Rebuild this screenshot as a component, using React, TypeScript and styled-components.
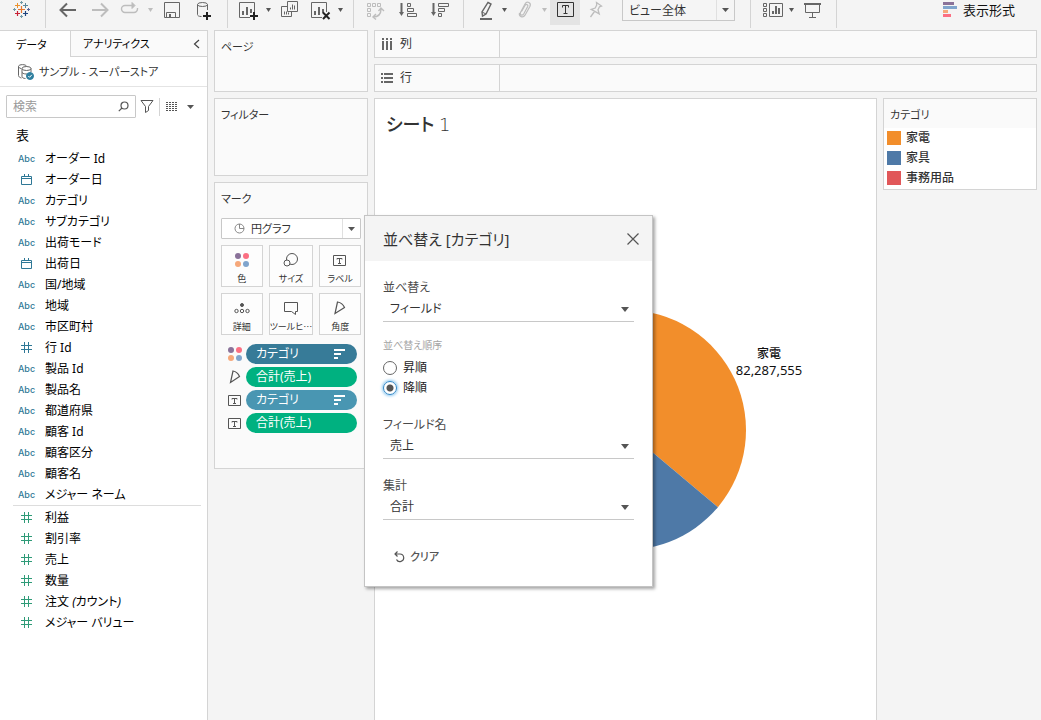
import React from 'react';
import styled, { createGlobalStyle, css } from 'styled-components';

const LINE = '#d4d4d4';
const INK = '#333';
const ICON = '#666';
const FAINT = '#bdbdbd';

const GlobalStyle = createGlobalStyle`
  * { box-sizing: border-box; }
  body {
    margin: 0;
    background: #f4f4f4;
    color: ${INK};
    font-family: 'Noto Sans', 'Noto Sans CJK JP', sans-serif;
    font-size: 12px;
    line-height: 16px;
    font-feature-settings: 'palt';
  }
  button, input, select { font: inherit; font-feature-settings: inherit; color: inherit; }
  button { padding: 0; border: 0; background: none; }
  svg { display: block; flex: none; }
`;

const Page = styled.div`
  position: relative;
  min-height: 100vh;
  overflow: hidden;
  display: flex;
  flex-direction: column;
`;

/* ---------- toolbar ---------- */

const Toolbar = styled.header`
  display: flex;
  align-items: flex-start;
  height: 30px;
  padding: 0 26px 0 6px;
`;

const ToolButton = styled.button<{ $w?: number; $active?: boolean }>`
  display: flex;
  justify-content: center;
  flex: none;
  width: ${p => p.$w ?? 32}px;
  height: 25px;
  background: ${p => (p.$active ? '#e4e4e4' : 'none')};
`;

const Separator = styled.span`
  flex: none;
  width: 1px;
  height: 28px;
  margin: 0 6px 0 7px;
  background: ${LINE};
`;

const ShowMe = styled.button`
  display: flex;
  align-items: center;
  gap: 5px;
  height: 20px;
  margin-left: auto;
  color: #111;
  font-size: 13px;
  white-space: nowrap;
`;

/* ---------- drop-downs ---------- */

const Picker = styled.div<{ $top?: boolean }>`
  position: relative;
  display: flex;
  flex: none;
  align-items: center;
  width: ${p => (p.$top ? '113px' : 'auto')};
  height: 21px;
  margin: ${p => (p.$top ? '0 8px 0 10px' : '11px 0 0')};
  border: 1px solid #c8c8c8;
  border-top-width: ${p => (p.$top ? 0 : 1)}px;
  border-radius: ${p => (p.$top ? 0 : 1)}px;
  background: ${p => (p.$top ? '#f5f5f5' : '#fff')};
  select {
    flex: 1;
    width: 100%;
    height: 19px;
    padding: 0 20px 0 ${p => (p.$top ? 6 : 29)}px;
    border: 0;
    background: none;
    appearance: none;
    font-size: ${p => (p.$top ? 12 : 11)}px;
    line-height: 19px;
  }
`;

const PickerArrow = styled.span`
  position: absolute;
  top: 0;
  right: 0;
  bottom: 0;
  display: flex;
  align-items: center;
  justify-content: center;
  width: 18px;
  border-left: 1px solid #e0e0e0;
  pointer-events: none;
`;

const PickerIcon = styled.span`
  position: absolute;
  left: 12px;
  pointer-events: none;
`;

/* ---------- workspace ---------- */

const Workspace = styled.div`
  flex: 1;
  display: flex;
  gap: 6px;
`;

const Sidebar = styled.aside`
  flex: none;
  width: 208px;
  border-top: 1px solid ${LINE};
  border-right: 1px solid ${LINE};
  background: #fff;
`;

const Tabs = styled.div`
  display: flex;
  height: 26px;
`;

const Tab = styled.button<{ $selected?: boolean }>`
  display: flex;
  align-items: center;
  justify-content: ${p => (p.$selected ? 'flex-start' : 'space-between')};
  flex: ${p => (p.$selected ? '0 0 71px' : '1')};
  padding: 1px 7px 0 ${p => (p.$selected ? 16 : 12)}px;
  color: #000;
  font-size: 11px;
  ${p => p.$selected
    ? css`border-right: 1px solid ${LINE};`
    : css`border-bottom: 1px solid ${LINE}; background: #fafafa;`}
`;

const Source = styled.button`
  display: flex;
  align-items: center;
  gap: 5px;
  width: 100%;
  height: 30px;
  padding: 0 18px;
  border-bottom: 1px solid #e4e4e4;
  font-size: 11px;
  white-space: nowrap;
`;

const SearchRow = styled.div`
  display: flex;
  align-items: center;
  padding: 8px 6px;
`;

const SearchBox = styled.label`
  display: flex;
  align-items: center;
  width: 130px;
  height: 23px;
  margin-right: 4px;
  padding: 0 6px;
  border: 1px solid #c8c8c8;
  border-radius: 1px;
  input {
    flex: 1;
    min-width: 0;
    padding: 0;
    border: 0;
    outline: 0;
    background: none;
    &::placeholder { color: #999; opacity: 1; }
  }
`;

const SearchDivider = styled.span`
  width: 1px;
  height: 18px;
  margin: 0 6px 0 5px;
  background: ${LINE};
`;

const IconButton = styled.button`
  display: flex;
  align-items: center;
  justify-content: center;
  gap: 8px;
`;

const TableHeading = styled.h2`
  margin: 0;
  padding: 1px 16px 5px;
  color: #000;
  font-size: 13px;
  font-weight: 400;
  line-height: 16px;
`;

const FieldList = styled.ul<{ $divided?: boolean }>`
  margin: 0 6px 0 13px;
  padding: ${p => (p.$divided ? 1 : 0)}px 0 0;
  border-top: ${p => (p.$divided ? '1px solid #ddd' : '0')};
  list-style: none;
`;

const Field = styled.li<{ $tone: string }>`
  display: flex;
  align-items: center;
  gap: 10px;
  height: 21px;
  padding-left: 5px;
  color: #000;
  white-space: nowrap;
  > span:first-child {
    display: flex;
    justify-content: center;
    width: 17px;
    color: ${p => p.$tone};
  }
`;

const Abc = styled.b`
  font-family: Inter, sans-serif;
  font-size: 9px;
  font-weight: 500;
`;

/* ---------- cards ---------- */

const Cards = styled.div`
  display: flex;
  flex: none;
  flex-direction: column;
  gap: 6px;
  width: 154px;
`;

const Card = styled.section<{ $h: number }>`
  min-height: ${p => p.$h}px;
  padding: 8px 6px;
  border: 1px solid ${LINE};
  background: #fafafa;
`;

const CardTitle = styled.h3`
  margin: 0;
  font-size: 11px;
  font-weight: 400;
  line-height: 16px;
`;

const MarkGrid = styled.div`
  display: grid;
  grid-template-columns: repeat(3, 1fr);
  gap: 6px;
  margin: 6px 0 9px;
`;

const MarkButton = styled.button`
  display: flex;
  flex-direction: column;
  align-items: center;
  justify-content: space-between;
  height: 42px;
  padding: 4px 0 1px;
  border: 1px solid ${LINE};
  background: #fdfdfd;
  font-family: 'Noto Sans CJK JP', sans-serif;
  font-size: 9px;
  line-height: 12px;
  white-space: nowrap;
`;

const PillRow = styled.div`
  display: flex;
  align-items: center;
  height: 20px;
  margin: 0 4px 3px 6px;
  gap: 3px;
`;

const Pill = styled.button<{ $color: string }>`
  display: flex;
  flex: 1;
  align-items: center;
  justify-content: space-between;
  height: 20px;
  padding: 0 12px 0 10px;
  border-radius: 10px;
  background: ${p => p.$color};
  color: #fff;
  font-size: 12px;
  line-height: 20px;
`;

/* ---------- shelves and sheet ---------- */

const Canvas = styled.main`
  display: flex;
  flex: 1;
  flex-direction: column;
  gap: 6px;
  min-width: 0;
  padding-right: 4px;
`;

const Shelf = styled.div`
  display: flex;
  flex: none;
  height: 28px;
  border: 1px solid ${LINE};
  background: #fafafa;
`;

const ShelfName = styled.div`
  display: flex;
  align-items: center;
  gap: 5px;
  width: 125px;
  padding-left: 4px;
  border-right: 1px solid ${LINE};
`;

const SheetRow = styled.div`
  display: flex;
  flex: 1;
  align-items: stretch;
  gap: 6px;
`;

const Sheet = styled.section`
  display: flex;
  flex: 1;
  flex-direction: column;
  border: 1px solid ${LINE};
  border-bottom: 0;
  background: #fff;
`;

const SheetTitle = styled.h1`
  margin: 0;
  padding: 13px 11px 2px;
  font-size: 18px;
  font-weight: 500;
  line-height: 24px;
  span {
    font-family: 'DejaVu Sans', sans-serif;
    font-weight: 200;
  }
`;

const ChartArea = styled.div`
  display: flex;
  flex: 1;
  align-items: center;
  justify-content: center;
  overflow: hidden;
  text {
    fill: #111;
    text-anchor: middle;
    font-size: 12px;
  }
  text + text {
    font-size: 13px;
  }
`;

const Legend = styled.section`
  align-self: flex-start;
  width: 154px;
  border: 1px solid ${LINE};
  background: #fff;
`;

const LegendTitle = styled.h3`
  margin: 0;
  padding: 8px 6px 5px;
  background: #fafafa;
  font-size: 11px;
  font-weight: 400;
  line-height: 16px;
`;

const LegendList = styled.ul`
  margin: 0;
  padding: 0 3px 1px;
  list-style: none;
`;

const LegendItem = styled.li<{ $color: string }>`
  display: flex;
  align-items: center;
  gap: 5px;
  height: 20px;
  font-weight: 500;
  &::before {
    content: '';
    width: 14px;
    height: 14px;
    background: ${p => p.$color};
  }
`;

/* ---------- sort dialog ---------- */

const Dialog = styled.form`
  position: absolute;
  top: 215px;
  left: 364px;
  width: 289px;
  border: 1px solid #c4c4c4;
  background: #fff;
  box-shadow: 2px 2px 3px rgba(0, 0, 0, 0.35);
`;

const DialogHeader = styled.div`
  display: flex;
  align-items: center;
  justify-content: space-between;
  height: 45px;
  padding: 0 13px 0 18px;
  background: #f4f4f4;
  h2 {
    margin: 0;
    font-size: 15px;
    font-weight: 400;
    line-height: 24px;
  }
`;

const DialogBody = styled.div`
  display: flex;
  flex-direction: column;
  padding: 19px 18px 18px;
`;

const SelectField = styled.div`
  position: relative;
  display: flex;
  flex-direction: column;
  margin-bottom: 19px;
  border-bottom: 1px solid #c8c8c8;
  label {
    color: #4a4a4a;
    line-height: 16px;
  }
  select {
    height: 25px;
    padding: 0 20px 0 7px;
    border: 0;
    background: none;
    appearance: none;
    line-height: 25px;
  }
  svg {
    position: absolute;
    right: 5px;
    bottom: 9px;
    pointer-events: none;
  }
`;

const OrderGroup = styled.fieldset`
  margin: -4px 0 19px;
  padding: 0;
  border: 0;
  legend {
    padding: 0;
    margin-bottom: 5px;
    color: #a3a3a3;
    font-size: 10px;
    line-height: 16px;
  }
  label {
    display: flex;
    align-items: center;
    gap: 6px;
    height: 20px;
    color: #222;
  }
`;

const Radio = styled.input`
  appearance: none;
  width: 14px;
  height: 14px;
  margin: 0;
  border: 1px solid #666;
  border-radius: 50%;
  background: #fff;
  &:checked {
    border-color: #2f86c6;
    background: radial-gradient(circle, #555 3px, #fff 4px);
    box-shadow: 0 0 3px 1px #8cc8f0;
  }
`;

const ClearButton = styled.button`
  display: flex;
  align-items: center;
  align-self: flex-start;
  gap: 5px;
  margin-top: 7px;
  padding-left: 10px;
  color: #555;
  font-size: 11px;
  font-weight: 500;
  line-height: 22px;
`;

/* ---------- icons ---------- */

type Kids = { children: React.ReactNode; color?: string };

const ToolIcon = ({ children, color = ICON }: Kids) => (
  <svg width="24" height="22" viewBox="0 0 24 22" fill="none" stroke={color} aria-hidden="true">
    {children}
  </svg>
);

const Caret = ({ color = '#555', w = 7 }: { color?: string; w?: number }) => (
  <svg width={w} height={w > 7 ? 5 : 4} viewBox="0 0 7 4" preserveAspectRatio="none" aria-hidden="true">
    <path d="M0 0h7L3.5 4z" fill={color} />
  </svg>
);

const CaretCell = styled(ToolButton).attrs({ $w: 12 })`
  align-items: center;
  height: 20px;
`;

const plus = (x: number, y: number, c: string, s = 3, w = 1) => (
  <path d={`M${x - s} ${y}h${2 * s}M${x} ${y - s}v${2 * s}`} stroke={c} strokeWidth={w} />
);

const Logo = () => (
  <ToolIcon>
    {plus(11.5, 9.5, '#e8762c', 3.5, 1.2)}
    {plus(7.5, 5.5, '#eb912c', 2.5)}
    {plus(15.5, 5.5, '#5b879b', 2.5)}
    {plus(7.5, 13.5, '#c72035', 2.5, 1.2)}
    {plus(15.5, 13.5, '#1f457e', 2.5, 1.2)}
    {plus(11.5, 2.5, '#7099a6', 1.5)}
    {plus(11.5, 16.5, '#7099a6', 1.5)}
    {plus(4.5, 9.5, '#7099a6', 1.5)}
    {plus(18.5, 9.5, '#59659a', 1.5)}
  </ToolIcon>
);

const chartBox = (
  <>
    <path d="M14 17.5H3.5v-15h15V12" />
    <path d="M7 15v-4M11 15V7M15 13V9" strokeWidth="2" />
  </>
);

const Dots = () => (
  <svg width="16" height="16" viewBox="0 0 16 16" stroke="none" aria-hidden="true">
    <circle cx="4" cy="4" r="3" fill="#8a7299" />
    <circle cx="12" cy="4" r="3" fill="#fb6f82" />
    <circle cx="4" cy="12" r="3" fill="#f6a87a" />
    <circle cx="12" cy="12" r="3" fill="#80a5cd" />
  </svg>
);

const MarkIcon = ({ children }: Kids) => (
  <svg width="16" height="22" viewBox="0 0 16 22" fill="none" stroke="#555" aria-hidden="true">
    {children}
  </svg>
);

const TextGlyph = () => (
  <>
    <path d="M1.5 1.5h12v10h-12z" />
    <path d="M5 5.5V4.5h5v1M7.5 4.5v5M6 9.5h3" />
  </>
);

const TextMark = () => (
  <svg width="16" height="13" viewBox="0 0 16 13" fill="none" stroke="#555" aria-hidden="true">
    <TextGlyph />
  </svg>
);

const AngleMark = () => (
  <svg width="16" height="14" viewBox="0 0 16 14" fill="none" stroke="#555" strokeWidth="1.2" aria-hidden="true">
    <path d="M6 1L3.500 12.500L12.500 6.500C11.500 4 9 1.500 6 1z" />
  </svg>
);

const SortMark = () => (
  <svg width="11" height="10" viewBox="0 0 11 10" fill="#fff" aria-hidden="true">
    <path d="M0 0h11v2H0zM0 4h7v2H0zM0 8h4v2H0z" />
  </svg>
);

const HashIcon = () => (
  <svg width="11" height="11" viewBox="0 0 11 11" fill="none" stroke="currentColor" aria-hidden="true">
    <path d="M3.500 0v11M7.500 0v11M0 3.500h11M0 7.500h11" />
  </svg>
);

const DateIcon = () => (
  <svg width="11" height="11" viewBox="0 0 11 11" fill="none" stroke="currentColor" aria-hidden="true">
    <path d="M.5 2.500h10v8H.5zM.5 4.500h10M3.500 0v2.500M7.500 0v2.500" />
  </svg>
);

/* ---------- data ---------- */

type Kind = 'abc' | 'date' | 'num';

const dimensions: [Kind, string][] = [
  ['abc', 'オーダー Id'],
  ['date', 'オーダー日'],
  ['abc', 'カテゴリ'],
  ['abc', 'サブカテゴリ'],
  ['abc', '出荷モード'],
  ['date', '出荷日'],
  ['abc', '国/地域'],
  ['abc', '地域'],
  ['abc', '市区町村'],
  ['num', '行 Id'],
  ['abc', '製品 Id'],
  ['abc', '製品名'],
  ['abc', '都道府県'],
  ['abc', '顧客 Id'],
  ['abc', '顧客区分'],
  ['abc', '顧客名'],
  ['abc', 'メジャー ネーム'],
];

const measures: React.ReactNode[] = [
  '利益',
  '割引率',
  '売上',
  '数量',
  <>注文 <em>(</em>カウント<em>)</em></>,
  'メジャー バリュー',
];

const slices = [
  { name: '家電', color: '#f28e2b', from: 0, to: 130 },
  { name: '家具', color: '#4e79a7', from: 130, to: 246 },
  { name: '事務用品', color: '#e15759', from: 246, to: 360 },
];

const R = 120;
const point = (deg: number) => {
  const a = (deg * Math.PI) / 180;
  return `${180 + R * Math.sin(a)} ${130 - R * Math.cos(a)}`;
};

const kindIcon = { abc: <Abc>Abc</Abc>, date: <DateIcon />, num: <HashIcon /> };

const marks = [
  { label: '色', icon: <MarkIcon><g transform="translate(0 2)"><Dots /></g></MarkIcon> },
  { label: 'サイズ', icon: <MarkIcon><circle cx="9" cy="9" r="5.500" /><circle cx="4" cy="13" r="3" fill="#fdfdfd" /></MarkIcon> },
  { label: 'ラベル', icon: <MarkIcon><g transform="translate(0 4)"><TextGlyph /></g></MarkIcon> },
  {
    label: '詳細',
    icon: (
      <MarkIcon>
        <circle cx="8" cy="7" r="1.500" fill="#555" />
        <circle cx="2.500" cy="13" r="1.700" />
        <circle cx="8" cy="13" r="1.700" />
        <circle cx="13.500" cy="13" r="1.700" />
      </MarkIcon>
    ),
  },
  { label: 'ツールヒ…', icon: <MarkIcon><path d="M1.500 4.500h13v9h-2v3l-4-3h-7z" /></MarkIcon> },
  { label: '角度', icon: <MarkIcon><path d="M5.500 4L3 15.500L12.500 9.500C11.500 7 8.500 4.500 5.500 4z" strokeWidth="1.200" /></MarkIcon> },
];

const pills = [
  { text: 'カテゴリ', color: '#377b98', sorted: true, icon: <Dots /> },
  { text: '合計(売上)', color: '#00b180', sorted: false, icon: <AngleMark /> },
  { text: 'カテゴリ', color: '#4996b2', sorted: true, icon: <TextMark /> },
  { text: '合計(売上)', color: '#00b180', sorted: false, icon: <TextMark /> },
];

const DialogSelect = ({ id, label, value }: { id: string; label: string; value: string }) => (
  <SelectField>
    <label htmlFor={id}>{label}</label>
    <select id={id}><option>{value}</option></select>
    <Caret w={8} />
  </SelectField>
);

export default function App() {
  return (
    <Page>
      <GlobalStyle />
      <Toolbar>
        <ToolButton aria-label="Home"><Logo /></ToolButton>
        <Separator />
        <ToolButton aria-label="元に戻す">
          <ToolIcon><path d="M20 10H5M11 3.500L4.500 10L11 16.500" strokeWidth="2" /></ToolIcon>
        </ToolButton>
        <ToolButton aria-label="やり直し">
          <ToolIcon color={FAINT}><path d="M4 10h15M13 3.500l6.500 6.500l-6.500 6.500" strokeWidth="2" /></ToolIcon>
        </ToolButton>
        <ToolButton $w={28} aria-label="再生">
          <ToolIcon color={FAINT}>
            <path d="M16 5.500H7a3.500 3.500 0 0 0 0 7h9a3.500 3.500 0 0 0 3.500-3.500V8" strokeWidth="1.400" />
            <path d="M14 2.500l3 3l-3 3z" fill={FAINT} />
          </ToolIcon>
        </ToolButton>
        <CaretCell aria-label="再生メニュー"><Caret color={FAINT} w={5} /></CaretCell>
        <ToolButton aria-label="保存">
          <ToolIcon>
            <path d="M4.500 2.500h15v15h-15zM6.500 17.500v-5h9v5" />
            <path d="M9 14h2v3H9z" fill={ICON} stroke="none" />
          </ToolIcon>
        </ToolButton>
        <ToolButton aria-label="新しいデータソース">
          <ToolIcon>
            <ellipse cx="10.500" cy="4.500" rx="5" ry="2" />
            <path d="M5.500 4.500v10c0 1 1 2 4 2M15.500 4.500V10" />
            {plus(15, 16, '#222', 4, 2)}
          </ToolIcon>
        </ToolButton>
        <Separator />
        <ToolButton $w={28} aria-label="新しいワークシート">
          <ToolIcon>{chartBox}{plus(18, 16, '#222', 4, 2)}</ToolIcon>
        </ToolButton>
        <CaretCell aria-label="ワークシートメニュー"><Caret w={5} /></CaretCell>
        <ToolButton aria-label="複製">
          <ToolIcon>
            <path d="M9.500 1.500h10v10h-10z" />
            <path d="M12.500 9.500v-2M14.500 9.500v-5M16.500 9.500v-4M9.500 6.500h-6v10h10v-5" />
            <path d="M6.500 14.500v-3M8.500 14.500v-3M10.500 14.500v-2" />
          </ToolIcon>
        </ToolButton>
        <ToolButton $w={28} aria-label="シートのクリア">
          <ToolIcon>{chartBox}<path d="M15 12.500l6.500 6.500M21.500 12.500l-6.500 6.500" stroke="#222" strokeWidth="2" /></ToolIcon>
        </ToolButton>
        <CaretCell aria-label="クリアメニュー"><Caret w={5} /></CaretCell>
        <Separator />
        <ToolButton aria-label="行と列の交換">
          <ToolIcon color={FAINT}>
            <path d="M3.500 3.500h3v3h-3zM8.500 3.500h3v3h-3zM13.500 3.500h3v3h-3zM3.500 8.500h3v3h-3zM3.500 13.500h3v3h-3z" />
            <path d="M9 17c5 0 8-3 8-8M14.500 11l2.500-3l3 3M12 14l-3 3l3 2.500" strokeWidth="1.400" />
          </ToolIcon>
        </ToolButton>
        <ToolButton aria-label="昇順">
          <ToolIcon>
            <path d="M5.500 3v10" strokeWidth="2" />
            <path d="M3 12h5l-2.500 4z" fill={ICON} stroke="none" />
            <path d="M11.500 3.500h3v3h-3zM11.500 8.500h6v3h-6zM11.500 13.500h9v3h-9z" />
          </ToolIcon>
        </ToolButton>
        <ToolButton aria-label="降順">
          <ToolIcon>
            <path d="M5.500 3v10" strokeWidth="2" />
            <path d="M3 12h5l-2.500 4z" fill={ICON} stroke="none" />
            <path d="M10.500 3.500h10v3h-10zM10.500 8.500h6v3h-6zM10.500 13.500h3v3h-3z" />
          </ToolIcon>
        </ToolButton>
        <Separator />
        <ToolButton $w={28} aria-label="ハイライト">
          <ToolIcon>
            <path d="M16 2.500l3 1.500l-5 10l-3.500 2l-.5-4z" strokeWidth="1.400" />
            <path d="M10 12l4 2" />
            <path d="M8 19h12" strokeWidth="2" />
          </ToolIcon>
        </ToolButton>
        <CaretCell aria-label="ハイライトメニュー"><Caret w={5} /></CaretCell>
        <ToolButton $w={28} aria-label="グループ">
          <ToolIcon color={FAINT}>
            <path d="M9.500 11.500l3.500-6c1-2 3.500-.8 2.700 1l-4 7.500" strokeWidth="1.200" />
            <path d="M11.700 14c-1.200 2-4.200 1-3.200-1.500l4.500-8.500c2-3.500 6.500-1.200 5 2.200l-5 9c-2 3-6.500 1.500-5.500-2.200" strokeWidth="1.200" />
          </ToolIcon>
        </ToolButton>
        <CaretCell aria-label="グループメニュー"><Caret color={FAINT} w={5} /></CaretCell>
        <ToolButton $w={30} $active aria-label="マークラベルの表示">
          <ToolIcon color="#333">
            <path d="M4.500 2.500h16v14h-16z" />
            <path d="M9.500 7.500v-2h6v2M12.500 5.500v8M10.500 13.500h4" />
          </ToolIcon>
        </ToolButton>
        <ToolButton aria-label="軸の固定">
          <ToolIcon color={FAINT}>
            <path d="M12.500 2.500l5 3.500l-2 .8l-1.500 3l1.200 4l-8-4.500l4-1.300l1.500-3zM10.500 11.500L6.500 17" strokeWidth="1.300" />
          </ToolIcon>
        </ToolButton>
        <Picker $top>
          <select aria-label="表示サイズ"><option>ビュー全体</option></select>
          <PickerArrow><Caret /></PickerArrow>
        </Picker>
        <Separator />
        <ToolButton $w={28} aria-label="カードの表示">
          <ToolIcon>
            <path d="M4.500 3.500h3v3h-3zM4.500 8.500h3v3h-3zM4.500 13.500h3v3h-3zM10.500 3.500h13v13h-13z" />
            <path d="M14 14v-3M17 14V6M20 14V8" strokeWidth="2" />
          </ToolIcon>
        </ToolButton>
        <CaretCell aria-label="カードメニュー"><Caret w={5} /></CaretCell>
        <ToolButton aria-label="プレゼンテーション">
          <ToolIcon>
            <path d="M3 4h17" strokeWidth="2" />
            <path d="M4.500 4v8.500h14V4M11.500 12.500v5M8 17.500h7" />
          </ToolIcon>
        </ToolButton>
        <Separator />
        <ShowMe>
          <svg width="16" height="16" viewBox="0 0 16 16" aria-hidden="true">
            <path d="M1 0h11v3H1z" fill="#8a7299" />
            <path d="M1 4h14v3H1z" fill="#80a5cd" />
            <path d="M1 8h5v3H1z" fill="#f6a87a" />
            <path d="M1 12h8v3H1z" fill="#fb6f82" />
          </svg>
          表示形式
        </ShowMe>
      </Toolbar>

      <Workspace>
        <Sidebar>
          <Tabs>
            <Tab $selected>データ</Tab>
            <Tab>
              アナリティクス
              <svg width="7" height="10" viewBox="0 0 7 10" fill="none" stroke="#444" strokeWidth="1.200" aria-hidden="true">
                <path d="M6 1L1.500 5L6 9" />
              </svg>
            </Tab>
          </Tabs>
          <Source>
            <svg width="16" height="16" viewBox="0 0 16 16" fill="none" stroke={ICON} aria-hidden="true">
              <path d="M.5 2.500v9c0 1 1 2 3 2.500M.5 2.500c0-2.500 8-2.500 8 0M.5 2.500c0 1 1 1.500 2.500 2" />
              <ellipse cx="8.500" cy="4.500" rx="4.500" ry="2" />
              <path d="M4 4.500v8c0 1 1.500 2 3.500 2M13 4.500V8M4 8.500c1 1.500 4 1.500 5 1.500" />
              <circle cx="12" cy="12" r="3.500" fill="#2f7f9f" stroke="#2f7f9f" />
              <path d="M10.300 12l1.300 1.300l2.200-2.500" stroke="#fff" />
            </svg>
            サンプル - スーパーストア
          </Source>
          <SearchRow>
            <SearchBox>
              <input type="text" placeholder="検索" aria-label="検索" />
              <svg width="11" height="11" viewBox="0 0 11 11" fill="none" stroke="#555" strokeWidth="1.200" aria-hidden="true">
                <circle cx="6.500" cy="4.500" r="3.500" />
                <path d="M4 7L.8 10.200" />
              </svg>
            </SearchBox>
            <IconButton aria-label="フィルター">
              <svg width="14" height="13" viewBox="0 0 14 13" fill="none" stroke="#555" aria-hidden="true">
                <path d="M1 .5h12L8.500 6.500v4l-3 2v-6z" />
              </svg>
            </IconButton>
            <SearchDivider />
            <IconButton aria-label="表示の切り替え">
              <svg width="13" height="11" viewBox="0 0 13 11" stroke="#555" aria-hidden="true">
                <path d="M0 1.500h12M0 3.500h12M0 5.500h12M0 7.500h12M0 9.500h12" strokeDasharray="2 1" />
              </svg>
              <Caret />
            </IconButton>
          </SearchRow>
          <TableHeading>表</TableHeading>
          <FieldList>
            {dimensions.map(([kind, name]) => (
              <Field key={name} $tone="#2f7896">
                <span>{kindIcon[kind]}</span>
                <span>{name}</span>
              </Field>
            ))}
          </FieldList>
          <FieldList $divided>
            {measures.map((name, i) => (
              <Field key={i} $tone="#2f9b78">
                <span><HashIcon /></span>
                <span>{name}</span>
              </Field>
            ))}
          </FieldList>
        </Sidebar>

        <Cards>
          <Card $h={62}><CardTitle>ページ</CardTitle></Card>
          <Card $h={78}><CardTitle>フィルター</CardTitle></Card>
          <Card $h={287}>
            <CardTitle>マーク</CardTitle>
            <Picker>
              <PickerIcon>
                <svg width="11" height="11" viewBox="0 0 11 11" fill="none" stroke="#888" aria-hidden="true">
                  <circle cx="5.500" cy="5.500" r="4.500" />
                  <path d="M5.500 1v4.500H10" />
                </svg>
              </PickerIcon>
              <select aria-label="マークの種類"><option>円グラフ</option></select>
              <PickerArrow><Caret /></PickerArrow>
            </Picker>
            <MarkGrid>
              {marks.map(m => (
                <MarkButton key={m.label}>{m.icon}{m.label}</MarkButton>
              ))}
            </MarkGrid>
            {pills.map((p, i) => (
              <PillRow key={i}>
                {p.icon}
                <Pill $color={p.color}>
                  {p.text}
                  {p.sorted && <SortMark />}
                </Pill>
              </PillRow>
            ))}
          </Card>
        </Cards>

        <Canvas>
          <Shelf>
            <ShelfName>
              <svg width="16" height="13" viewBox="0 0 16 13" fill={ICON} aria-hidden="true">
                <path d="M3 0h2v2H3zM7 0h2v2H7zM11 0h2v2h-2zM3 3h2v9H3zM7 3h2v9H7zM11 3h2v9h-2z" />
              </svg>
              列
            </ShelfName>
          </Shelf>
          <Shelf>
            <ShelfName>
              <svg width="16" height="13" viewBox="0 0 16 13" fill={ICON} aria-hidden="true">
                <path d="M2 1h2v2H2zM2 5h2v2H2zM2 9h2v2H2zM5 1h9v2H5zM5 5h9v2H5zM5 9h9v2H5z" />
              </svg>
              行
            </ShelfName>
          </Shelf>
          <SheetRow>
            <Sheet>
              <SheetTitle>シート <span>1</span></SheetTitle>
              <ChartArea>
                <svg width="360" height="260" viewBox="0 0 360 260" overflow="visible" role="img" aria-label="カテゴリ別の売上">
                  {slices.map(s => (
                    <path
                      key={s.name}
                      d={`M180 130L${point(s.from)}A${R} ${R} 0 0 1 ${point(s.to)}Z`}
                      fill={s.color}
                    />
                  ))}
                  <text x="323" y="58" fontWeight="500">家電</text>
                  <text x="323" y="75">82,287,555</text>
                </svg>
              </ChartArea>
            </Sheet>
            <Legend>
              <LegendTitle>カテゴリ</LegendTitle>
              <LegendList>
                {slices.map(s => (
                  <LegendItem key={s.name} $color={s.color}>{s.name}</LegendItem>
                ))}
              </LegendList>
            </Legend>
          </SheetRow>
        </Canvas>
      </Workspace>

      <Dialog aria-label="並べ替え [カテゴリ]">
        <DialogHeader>
          <h2>並べ替え [カテゴリ]</h2>
          <IconButton type="button" aria-label="閉じる">
            <svg width="12" height="12" viewBox="0 0 12 12" fill="none" stroke="#555" strokeWidth="1.200" aria-hidden="true">
              <path d="M.5.5l11 11M11.500.5l-11 11" />
            </svg>
          </IconButton>
        </DialogHeader>
        <DialogBody>
          <DialogSelect id="sort-by" label="並べ替え" value="フィールド" />
          <OrderGroup>
            <legend>並べ替え順序</legend>
            <label><Radio type="radio" name="order" />昇順</label>
            <label><Radio type="radio" name="order" defaultChecked />降順</label>
          </OrderGroup>
          <DialogSelect id="sort-field" label="フィールド名" value="売上" />
          <DialogSelect id="sort-agg" label="集計" value="合計" />
          <ClearButton type="button">
            <svg width="12" height="12" viewBox="0 0 12 12" fill="none" stroke="#555" strokeWidth="1.200" aria-hidden="true">
              <path d="M2 3h5a3.800 3.800 0 1 1-3.500 5.500M4.500.5L2 3l2.500 2.500" />
            </svg>
            クリア
          </ClearButton>
        </DialogBody>
      </Dialog>
    </Page>
  );
}
